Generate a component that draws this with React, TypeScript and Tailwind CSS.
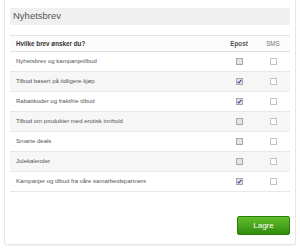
const rows: { label: string; epost: boolean; sms: boolean }[] = [
  { label: "Nyhetsbrev og kampanjetilbud", epost: false, sms: false },
  { label: "Tilbud basert på tidligere kjøp", epost: true, sms: false },
  { label: "Rabattkoder og fraktfrie tilbud", epost: true, sms: false },
  { label: "Tilbud om produkter med erotisk innhold", epost: false, sms: false },
  { label: "Smarte deals", epost: false, sms: false },
  { label: "Julekalender", epost: false, sms: false },
  { label: "Kampanjer og tilbud fra våre samarbeidspartners", epost: true, sms: false },
];

const Box = ({ checked, shaded }: { checked: boolean; shaded?: boolean }) => (
  <span
    className={
      shaded
        ? "flex h-[7px] w-[7px] items-center justify-center border border-[#a9a9a9] bg-[#e4e4e4]"
        : "flex h-[7px] w-[7px] items-center justify-center border border-[#c4c4c4] bg-white"
    }
  >
    {checked && (
      <svg width="5" height="5" viewBox="0 0 5 5">
        <path d="M0.6 2.6 L1.9 3.9 L4.4 0.8" fill="none" stroke="#4b46a8" strokeWidth="1.1" />
      </svg>
    )}
  </span>
);

export default function App() {
  return (
    <div className="h-[248px] w-[300px] bg-white font-['Liberation_Sans',Arial,sans-serif]">
      <div className="ml-[4px] flex h-[245px] w-[292px] flex-col rounded-b-[3px] border border-t-0 border-[#e6e6e6] px-[5px] pt-[8px] shadow-[0_1px_2px_rgba(0,0,0,0.05)]">
        <div className="flex h-[17px] items-center bg-[#f0f0f0] pl-[3px] text-[9.5px] text-[#555]">
          Nyhetsbrev
        </div>

        <div className="mt-[10px] flex flex-col">
          <div className="flex h-[17px] items-center border-y border-[#e2e2e2] bg-[#fcfcfc] pl-[6px] text-[6.3px] font-bold text-[#333]">
            <span className="flex-1">Hvilke brev ønsker du?</span>
            <span className="w-[34px] text-center text-[#555]">Epost</span>
            <span className="w-[34px] text-center font-normal text-[#777]">SMS</span>
          </div>
          {rows.map((row, i) => (
            <div
              key={row.label}
              className={
                i % 2 === 1
                  ? "flex h-[20px] items-center border-b border-[#e8e8e8] bg-[#f6f6f6] pl-[6px] text-[6px] text-[#555]"
                  : "flex h-[20px] items-center border-b border-[#e8e8e8] bg-white pl-[6px] text-[6px] text-[#555]"
              }
            >
              <span className="flex-1">{row.label}</span>
              <span className="flex w-[34px] justify-center">
                <Box checked={row.epost} shaded />
              </span>
              <span className="flex w-[34px] justify-center">
                <Box checked={row.sms} />
              </span>
            </div>
          ))}
        </div>

        <div className="mt-[24px] flex justify-end">
          <button className="flex h-[19px] w-[53px] items-center justify-center rounded-[2px] border border-[#2c7d0c] bg-gradient-to-b from-[#62bf2c] to-[#2f8d0a] text-[8px] text-white">
            Lagre
          </button>
        </div>
      </div>
    </div>
  );
}
